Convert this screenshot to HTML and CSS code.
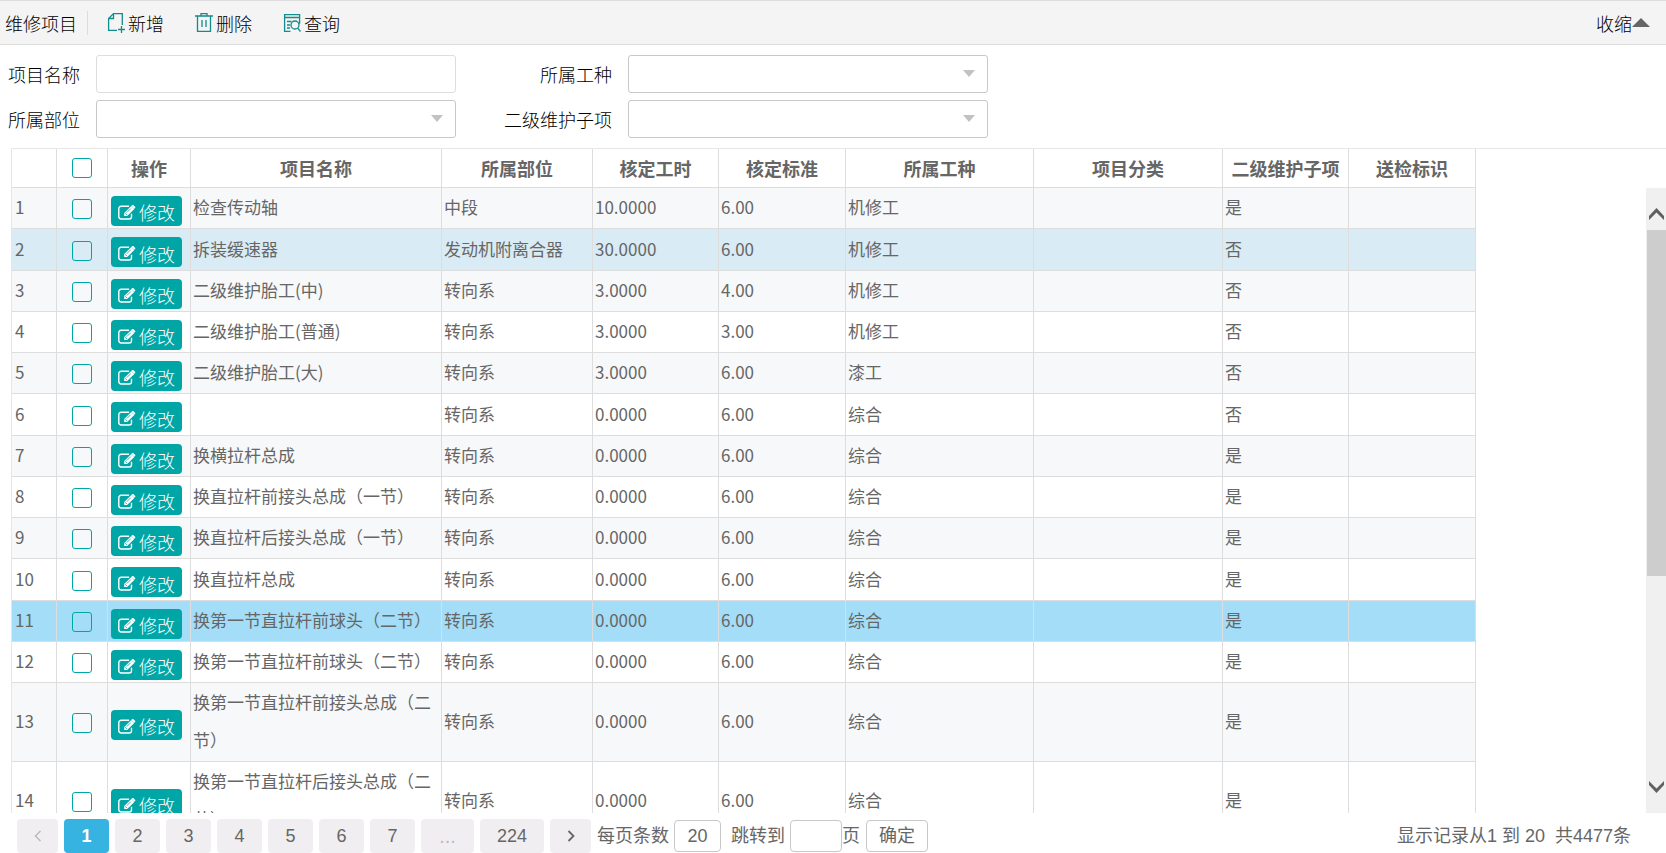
FILE: index.html
```html
<!DOCTYPE html>
<html lang="zh-CN">
<head>
<meta charset="utf-8">
<title>维修项目</title>
<link rel="stylesheet" href="styles.css">
</head>
<body>
<svg class="sprite" aria-hidden="true">
  <symbol id="edit" viewBox="0 0 18 15">
    <path d="M13.5 8.8v2.9a2.3 2.3 0 0 1-2.3 2.3H3.1A2.3 2.3 0 0 1 .8 11.700V3.600A2.3 2.3 0 0 1 3.100 1.300h8" fill="none" stroke="currentColor" stroke-width="1.400"/>
    <path d="M6.200 8 13.300.900l3 3L9.200 11H6.200z" fill="currentColor"/>
    <path d="M14.100.200a1 1 0 0 1 1.400 0l1.500 1.500a1 1 0 0 1 0 1.400l-.700.700-3-3z" fill="currentColor"/>
    <path d="m7.100 8.200 1.900 1.900M8.800 7.600l4-4" stroke="#00a5a5" stroke-width=".8"/>
  </symbol>
  <symbol id="arrow" viewBox="0 0 12 7"><path d="M0 0h12L6 7z" fill="currentColor"/></symbol>
</svg>
<main class="page">
  <header class="toolbar">
    <h1 class="title">维修项目</h1>
    <button class="tool" type="button">
      <svg class="tool-icon" viewBox="0 0 18 22" fill="none" stroke="currentColor" stroke-width="1.300"><path d="M10 18.300H1.600V6.500L6.500 1.600h8.800V13M6.500 1.600v4.900H1.600M14.500 14v7M11 17.500h7"/></svg>新增</button>
    <button class="tool" type="button">
      <svg class="tool-icon" viewBox="0 0 18 22" fill="none" stroke="currentColor" stroke-width="1.300"><path d="M0 4h18M6 3.500V1.700h6v1.800M2.500 4v15.300h13V4M7 8v7M11 8v7"/></svg>删除</button>
    <button class="tool" type="button">
      <svg class="tool-icon" viewBox="0 0 18 22" fill="none" stroke="currentColor" stroke-width="1.300"><path d="M7.500 19.300H1.600V2.700h15v9M1.600 5.500h15M4 9.500h4.500M4 13h3M4 16h3"/><circle cx="12" cy="13" r="4"/><path d="m14.700 16.200 2.800 3.300"/></svg>查询</button>
    <button class="fold" type="button">收缩<svg class="fold-icon" viewBox="0 0 18 9"><path d="m0 9 9-9 9 9z" fill="#666"/></svg></button>
  </header>

  <form class="filters">
    <label class="label" for="name">项目名称</label>
    <input class="field light" id="name" type="text">
    <label class="label" for="trade">所属工种</label>
    <span class="combo"><select class="field" id="trade"><option></option></select><svg class="combo-icon"><use href="#arrow"/></svg></span>
    <label class="label" for="part">所属部位</label>
    <span class="combo"><select class="field" id="part"><option></option></select><svg class="combo-icon"><use href="#arrow"/></svg></span>
    <label class="label" for="sub">二级维护子项</label>
    <span class="combo"><select class="field" id="sub"><option></option></select><svg class="combo-icon"><use href="#arrow"/></svg></span>
  </form>

  <section class="list">
    <div class="viewport">
      <table class="grid">
        <colgroup><col class="c-no"><col class="c-check"><col class="c-act"><col class="c-name"><col class="c-part"><col class="c-hours"><col class="c-rate"><col class="c-trade"><col class="c-class"><col class="c-sub"><col class="c-rate"></colgroup>
        <thead>
          <tr><th></th><th><input class="check" type="checkbox" aria-label="全选"></th><th>操作</th><th>项目名称</th><th>所属部位</th><th>核定工时</th><th>核定标准</th><th>所属工种</th><th>项目分类</th><th>二级维护子项</th><th>送检标识</th></tr>
        </thead>
        <tbody>
          <tr><td>1</td><td class="pick"><input class="check" type="checkbox" aria-label="选择 1"></td><td class="act"><button class="edit" type="button"><svg class="edit-icon"><use href="#edit"/></svg>修改</button></td><td>检查传动轴</td><td>中段</td><td>10.0000</td><td>6.00</td><td>机修工</td><td></td><td>是</td><td></td></tr>
          <tr class="hover"><td>2</td><td class="pick"><input class="check" type="checkbox" aria-label="选择 2"></td><td class="act"><button class="edit" type="button"><svg class="edit-icon"><use href="#edit"/></svg>修改</button></td><td>拆装缓速器</td><td>发动机附离合器</td><td>30.0000</td><td>6.00</td><td>机修工</td><td></td><td>否</td><td></td></tr>
          <tr><td>3</td><td class="pick"><input class="check" type="checkbox" aria-label="选择 3"></td><td class="act"><button class="edit" type="button"><svg class="edit-icon"><use href="#edit"/></svg>修改</button></td><td>二级维护胎工(中)</td><td>转向系</td><td>3.0000</td><td>4.00</td><td>机修工</td><td></td><td>否</td><td></td></tr>
          <tr><td>4</td><td class="pick"><input class="check" type="checkbox" aria-label="选择 4"></td><td class="act"><button class="edit" type="button"><svg class="edit-icon"><use href="#edit"/></svg>修改</button></td><td>二级维护胎工(普通)</td><td>转向系</td><td>3.0000</td><td>3.00</td><td>机修工</td><td></td><td>否</td><td></td></tr>
          <tr><td>5</td><td class="pick"><input class="check" type="checkbox" aria-label="选择 5"></td><td class="act"><button class="edit" type="button"><svg class="edit-icon"><use href="#edit"/></svg>修改</button></td><td>二级维护胎工(大)</td><td>转向系</td><td>3.0000</td><td>6.00</td><td>漆工</td><td></td><td>否</td><td></td></tr>
          <tr><td>6</td><td class="pick"><input class="check" type="checkbox" aria-label="选择 6"></td><td class="act"><button class="edit" type="button"><svg class="edit-icon"><use href="#edit"/></svg>修改</button></td><td></td><td>转向系</td><td>0.0000</td><td>6.00</td><td>综合</td><td></td><td>否</td><td></td></tr>
          <tr><td>7</td><td class="pick"><input class="check" type="checkbox" aria-label="选择 7"></td><td class="act"><button class="edit" type="button"><svg class="edit-icon"><use href="#edit"/></svg>修改</button></td><td>换横拉杆总成</td><td>转向系</td><td>0.0000</td><td>6.00</td><td>综合</td><td></td><td>是</td><td></td></tr>
          <tr><td>8</td><td class="pick"><input class="check" type="checkbox" aria-label="选择 8"></td><td class="act"><button class="edit" type="button"><svg class="edit-icon"><use href="#edit"/></svg>修改</button></td><td>换直拉杆前接头总成（一节）</td><td>转向系</td><td>0.0000</td><td>6.00</td><td>综合</td><td></td><td>是</td><td></td></tr>
          <tr><td>9</td><td class="pick"><input class="check" type="checkbox" aria-label="选择 9"></td><td class="act"><button class="edit" type="button"><svg class="edit-icon"><use href="#edit"/></svg>修改</button></td><td>换直拉杆后接头总成（一节）</td><td>转向系</td><td>0.0000</td><td>6.00</td><td>综合</td><td></td><td>是</td><td></td></tr>
          <tr><td>10</td><td class="pick"><input class="check" type="checkbox" aria-label="选择 10"></td><td class="act"><button class="edit" type="button"><svg class="edit-icon"><use href="#edit"/></svg>修改</button></td><td>换直拉杆总成</td><td>转向系</td><td>0.0000</td><td>6.00</td><td>综合</td><td></td><td>是</td><td></td></tr>
          <tr class="current"><td>11</td><td class="pick"><input class="check" type="checkbox" aria-label="选择 11"></td><td class="act"><button class="edit" type="button"><svg class="edit-icon"><use href="#edit"/></svg>修改</button></td><td>换第一节直拉杆前球头（二节）</td><td>转向系</td><td>0.0000</td><td>6.00</td><td>综合</td><td></td><td>是</td><td></td></tr>
          <tr><td>12</td><td class="pick"><input class="check" type="checkbox" aria-label="选择 12"></td><td class="act"><button class="edit" type="button"><svg class="edit-icon"><use href="#edit"/></svg>修改</button></td><td>换第一节直拉杆前球头（二节）</td><td>转向系</td><td>0.0000</td><td>6.00</td><td>综合</td><td></td><td>是</td><td></td></tr>
          <tr><td>13</td><td class="pick"><input class="check" type="checkbox" aria-label="选择 13"></td><td class="act"><button class="edit" type="button"><svg class="edit-icon"><use href="#edit"/></svg>修改</button></td><td>换第一节直拉杆前接头总成（二节）</td><td>转向系</td><td>0.0000</td><td>6.00</td><td>综合</td><td></td><td>是</td><td></td></tr>
          <tr><td>14</td><td class="pick"><input class="check" type="checkbox" aria-label="选择 14"></td><td class="act"><button class="edit" type="button"><svg class="edit-icon"><use href="#edit"/></svg>修改</button></td><td>换第一节直拉杆后接头总成（二节）</td><td>转向系</td><td>0.0000</td><td>6.00</td><td>综合</td><td></td><td>是</td><td></td></tr>
        </tbody>
      </table>
    </div>
    <div class="scrollbar" aria-hidden="true">
      <svg class="scroll-arrow up" viewBox="0 0 15 12"><path d="M0 12V8l7.500-8L15 8v4L7.500 4.500z" fill="#606060"/></svg>
      <div class="thumb"></div>
      <svg class="scroll-arrow down" viewBox="0 0 15 12"><path d="M0 0v4l7.500 8L15 4V0L7.500 7.500z" fill="#606060"/></svg>
    </div>
  </section>

  <footer class="pager">
    <nav class="pages" aria-label="分页">
      <button class="page-btn step" type="button" disabled aria-label="上一页"><svg class="chev" viewBox="0 0 8 12"><path d="M6.500 1 1.500 6l5 5" fill="none" stroke="currentColor" stroke-width="1.500"/></svg></button>
      <button class="page-btn active" type="button">1</button>
      <button class="page-btn" type="button">2</button>
      <button class="page-btn" type="button">3</button>
      <button class="page-btn" type="button">4</button>
      <button class="page-btn" type="button">5</button>
      <button class="page-btn" type="button">6</button>
      <button class="page-btn" type="button">7</button>
      <button class="page-btn more" type="button" disabled>...</button>
      <button class="page-btn last" type="button">224</button>
      <button class="page-btn step" type="button" aria-label="下一页"><svg class="chev" viewBox="0 0 8 12"><path d="m1.500 1 5 5-5 5" fill="none" stroke="currentColor" stroke-width="1.800"/></svg></button>
    </nav>
    <label class="size-label" for="size">每页条数</label>
    <input class="box size" id="size" type="text" value="20">
    <label class="jump-label" for="jump">跳转到</label>
    <input class="box jump" id="jump" type="text"><span>页</span>
    <button class="box ok" type="button">确定</button>
    <p class="info">显示记录从1 到 20 &nbsp;共4477条</p>
  </footer>
</main>
</body>
</html>
```
FILE: styles.css
```css
* { box-sizing: border-box; }
body {
  margin: 0;
  background: #fff;
  color: #000;
  font: 400 18px/24px "Noto Sans CJK SC", sans-serif;
}
button, input, select { font: inherit; color: inherit; margin: 0; }
button { border: 0; padding: 0; background: none; }
.sprite { position: absolute; width: 0; height: 0; }
.page { display: flex; flex-direction: column; height: 100vh; overflow: hidden; }

.toolbar {
  display: flex;
  align-items: center;
  flex: none;
  height: 45px;
  padding: 0 16px 0 5px;
  background: #f4f4f4;
  border-top: 1px solid #ddd;
  border-bottom: 1px solid #ddd;
  font-weight: 300;
}
.title {
  margin: 0 19px 0 0;
  padding-right: 10px;
  border-right: 1px solid #ddd;
  font-size: 18px;
  font-weight: 300;
}
.tool { display: flex; align-items: center; gap: 3px; margin-right: 31px; }
.tool-icon { width: 18px; height: 22px; color: #128c8c; }
.fold { display: flex; align-items: center; margin-left: auto; }
.fold-icon { width: 18px; height: 9px; }

.filters {
  display: grid;
  grid-template-columns: 80px 360px 140px 360px;
  column-gap: 16px;
  row-gap: 7px;
  flex: none;
  padding: 10px 0;
  font-weight: 300;
}
.label { align-self: center; text-align: right; white-space: nowrap; }
.combo { position: relative; display: flex; }
.field {
  appearance: none;
  width: 100%;
  height: 38px;
  padding: 0 12px;
  border: 1px solid #c8c8c8;
  border-radius: 3px;
  background: #fff;
  outline: 0;
}
.light { border-color: #ddd; }
.combo-icon {
  position: absolute;
  top: 15px;
  right: 13px;
  width: 12px;
  height: 7px;
  color: #c2c2c2;
  pointer-events: none;
}

.list {
  display: flex;
  flex: 1;
  min-height: 0;
  margin-left: 11px;
  border-top: 1px solid #e6e6e6;
  border-left: 1px solid #e6e6e6;
  border-top-left-radius: 2px;
}
.viewport { flex: 1; overflow: hidden; }
.grid {
  width: 1464px;
  table-layout: fixed;
  border-collapse: separate;
  border-spacing: 0;
  color: #666;
  font-size: 17px;
  line-height: 38px;
}
.c-no { width: 45px; }
.c-check { width: 51px; }
.c-act { width: 83px; }
.c-name { width: 251px; }
.c-part { width: 151px; }
.c-hours, .c-sub { width: 126px; }
.c-rate { width: 127px; }
.c-trade { width: 188px; }
.c-class { width: 189px; }
.grid th, .grid td {
  padding: 0 2px;
  border-right: 1px solid #ddd;
  border-bottom: 1px solid #ddd;
  text-align: left;
}
.grid th { height: 39px; font-size: 18px; font-weight: 700; text-align: center; }
.grid td { height: 41px; padding-bottom: 2px; }
.grid tr:nth-child(4n+2) td { height: 42px; }
.grid tbody tr:nth-child(odd) { background: #f7f8fa; }
.grid tbody .hover { background: #d9ebf4; }
.grid tbody tr.current { background: #a3ddf8; }
.grid td:first-child { padding-left: 3px; }
.grid .pick { padding: 2px 2px 0; }
.grid .act { padding: 5px 0 0 3px; }
.check {
  appearance: none;
  display: block;
  width: 20px;
  height: 20px;
  margin: 0 auto;
  border: 1px solid #00a5a5;
  border-radius: 3px;
}
.edit {
  display: flex;
  align-items: center;
  gap: 3px;
  height: 30px;
  padding: 3px 7px 0;
  border-radius: 4px;
  background: #00a5a5;
  color: #fff;
  font-size: 18px;
  font-weight: 300;
  line-height: 24px;
}
.edit-icon { width: 18px; height: 15px; }

.scrollbar {
  display: flex;
  flex-direction: column;
  width: 20px;
  margin-top: 39px;
  padding-left: 1px;
  background: #f0f0f0;
}
.scroll-arrow { flex: none; width: 15px; height: 12px; align-self: center; }
.up { margin: 20px 0 10px; }
.thumb { flex: 0 1 346px; background: #cdcdcd; }
.down { margin: auto 0 20px; }

.pager {
  display: flex;
  align-items: center;
  flex: none;
  height: 40px;
  padding: 6px 35px 0 17px;
  color: #666;
  font-family: "Liberation Sans", "Noto Sans CJK SC", sans-serif;
}
.pages { display: flex; gap: 6px; margin-right: 6px; }
.page-btn {
  display: flex;
  align-items: center;
  justify-content: center;
  width: 45px;
  height: 34px;
  border-radius: 4px;
  background: #f0eef1;
}
.page-btn:disabled { color: #bbb; }
.active { background: #36b3e0; color: #fff; font-weight: 700; }
.step { width: 41px; }
.more { width: 53px; font-size: 20px; }
.last { width: 64px; }
.chev { width: 8px; height: 12px; }
.size-label { margin-right: 5px; }
.box {
  height: 32px;
  padding: 0;
  border: 1px solid #c8c8c8;
  border-radius: 4px;
  background: #fff;
  text-align: center;
}
.size { width: 47px; margin-right: 10px; }
.jump-label { margin-right: 5px; }
.jump { width: 52px; }
.ok { width: 62px; margin-left: 6px; }
.info { margin: 0 0 0 auto; white-space: nowrap; }
```
